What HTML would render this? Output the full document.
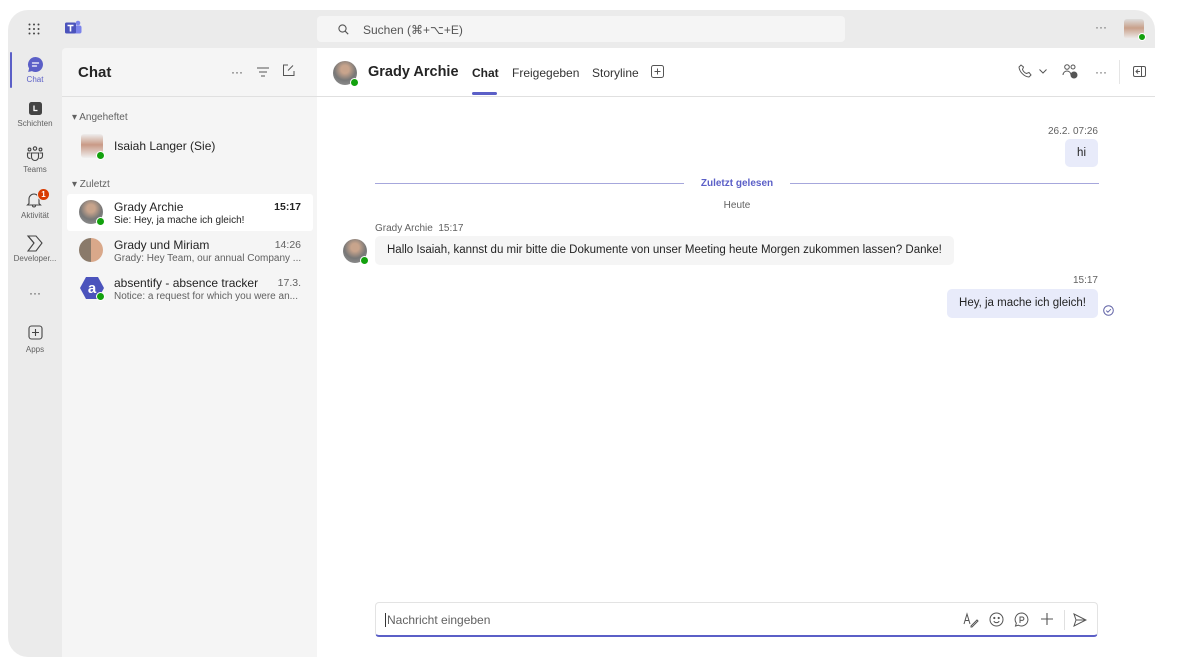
<!DOCTYPE html>
<html><head><meta charset="utf-8"><style>
*{box-sizing:border-box;margin:0;padding:0}
body{width:1178px;height:666px;background:#fff;font-family:"Liberation Sans",sans-serif;position:relative;overflow:hidden;color:#242424}
.app{position:absolute;left:8px;top:10px;width:1147px;height:647px;background:#ebebeb;border-radius:20px 20px 0 20px;overflow:hidden}
.top{position:absolute;left:0;top:0;right:0;height:38px}
.search{position:absolute;left:309px;top:6px;width:528px;height:26px;background:#f5f5f5;border-radius:4px;font-size:12px;color:#555;padding:7px 0 0 46px}
.rail{position:absolute;left:0;top:38px;width:54px;bottom:0}
.ri{position:absolute;left:0;width:54px;text-align:center;font-size:8px;color:#616161}
.list{position:absolute;left:54px;top:38px;width:255px;bottom:0;background:#f5f5f5;border-top-left-radius:4px}
.main{position:absolute;left:309px;top:38px;right:0;bottom:0;background:#fff}
.av{position:absolute;width:24px;height:24px;border-radius:50%}
.dot{position:absolute;width:9px;height:9px;border-radius:50%;background:#13a10e;border:1.5px solid #fff;right:-2px;bottom:-2px}
.row{position:absolute;left:5px;width:246px;height:37px}
.n{position:absolute;left:47px;top:6px;font-size:12px;color:#242424}
.p{position:absolute;left:47px;top:21px;font-size:10px;color:#616161;white-space:nowrap}
.t{position:absolute;right:12px;top:7px;font-size:10.5px;color:#616161}
.bub{position:absolute;border-radius:5px;font-size:11.5px;padding:0 12px;line-height:29px;white-space:nowrap}
.meta{position:absolute;font-size:10px;color:#616161}
</style></head><body>
<div class="app">
 <div class="top">
  <svg style="position:absolute;left:20px;top:13px" width="12" height="12" viewBox="0 0 12 12" fill="#444"><circle cx="1.5" cy="1.5" r="1"/><circle cx="6" cy="1.5" r="1"/><circle cx="10.5" cy="1.5" r="1"/><circle cx="1.5" cy="6" r="1"/><circle cx="6" cy="6" r="1"/><circle cx="10.5" cy="6" r="1"/><circle cx="1.5" cy="10.5" r="1"/><circle cx="6" cy="10.5" r="1"/><circle cx="10.5" cy="10.5" r="1"/></svg>
  <svg style="position:absolute;left:56px;top:10px" width="18" height="16" viewBox="0 0 18 16"><circle cx="14" cy="3" r="2.3" fill="#7b83eb"/><rect x="10" y="5.5" width="7.5" height="8" rx="2" fill="#7b83eb"/><rect x="1" y="2.5" width="11" height="11" rx="1.5" fill="#4b53bc"/><path d="M3.5 5.5h6M6.5 5.5v6" stroke="#fff" stroke-width="1.6"/></svg>
  <div class="search">Suchen (⌘+⌥+E)</div>
  <svg style="position:absolute;left:330px;top:14px" width="11" height="11" viewBox="0 0 11 11" fill="none" stroke="#555" stroke-width="1.1"><circle cx="4.5" cy="4.5" r="3.6"/><path d="M7.2 7.2l3 3"/></svg>
  <div style="position:absolute;left:1087px;top:10px;font-size:12px;color:#616161">···</div>
  <div class="av" style="left:1116px;top:9px;width:20px;height:20px;border-radius:3px;background:linear-gradient(#ddd,#c9a08a 45%,#eee)"><div class="dot" style="width:8px;height:8px"></div></div>
 </div>
 <div class="rail">
  <div style="position:absolute;left:2px;top:4px;width:2px;height:36px;background:#5b5fc7;border-radius:1px"></div>
  <div class="ri" style="top:8px"><svg width="17" height="17" viewBox="0 0 17 17"><path d="M8.5 1a7.5 7.5 0 1 1-3.6 14.1L1.2 16l.9-3.6A7.5 7.5 0 0 1 8.5 1z" fill="#5b5fc7"/><path d="M5.5 7h6M5.5 10h4" stroke="#fff" stroke-width="1.3" stroke-linecap="round"/></svg><div style="color:#5b5fc7;margin-top:0">Chat</div></div>
  <div class="ri" style="top:54px"><svg width="13" height="13" viewBox="0 0 13 13"><rect width="13" height="13" rx="2.5" fill="#444"/><path d="M5 3.5v5h3.5" stroke="#fff" stroke-width="1.3" fill="none"/></svg><div style="margin-top:2px">Schichten</div></div>
  <div class="ri" style="top:98px"><svg width="18" height="16" viewBox="0 0 18 16" fill="none" stroke="#444" stroke-width="1.1"><circle cx="9" cy="2.5" r="1.7"/><circle cx="3.5" cy="3.5" r="1.4"/><circle cx="14.5" cy="3.5" r="1.4"/><path d="M5.5 7h7v4a3.5 3.5 0 0 1-7 0z"/><path d="M4.5 7H1.5v3a2.5 2.5 0 0 0 3 2.4M13.5 7h3v3a2.5 2.5 0 0 1-3 2.4"/></svg><div style="margin-top:1px">Teams</div></div>
  <div class="ri" style="top:143px"><svg width="18" height="17" viewBox="0 0 18 17" fill="none" stroke="#444" stroke-width="1.1"><path d="M3 12.5V8a5 5 0 0 1 10 0v4.5l1.5 1.5h-13z"/><path d="M6.5 14.5a1.5 1.5 0 0 0 3 0"/></svg><div style="margin-top:1px">Aktivität</div>
   <div style="position:absolute;left:29px;top:-3px;width:13px;height:13px;border-radius:50%;background:#d83b01;color:#fff;font-size:8px;line-height:11px;font-weight:bold;border:1px solid #ebebeb">1</div></div>
  <div class="ri" style="top:187px"><svg width="18" height="17" viewBox="0 0 18 17" fill="none" stroke="#444" stroke-width="1.1"><path d="M2 1h8l6 7-6 8H2l6-8z"/><path d="M2 1l6 7"/></svg><div style="margin-top:0">Developer...</div></div>
  <div class="ri" style="top:238px;font-size:12px;color:#444">···</div>
  <div class="ri" style="top:277px"><svg width="15" height="15" viewBox="0 0 15 15" fill="none" stroke="#444" stroke-width="1.1"><rect x="1" y="1" width="13" height="13" rx="2.5"/><path d="M7.5 4v7M4 7.5h7"/></svg><div style="margin-top:3px">Apps</div></div>
 </div>
 <div class="list">
  <div style="position:absolute;left:16px;top:16px;font-size:15px;font-weight:bold">Chat</div>
  <div style="position:absolute;left:169px;top:17px;font-size:12px;color:#444">···</div>
  <svg style="position:absolute;left:195px;top:19px" width="12" height="10" viewBox="0 0 12 10" stroke="#555" stroke-width="1"><path d="M0 1h12M2 5h8M4 9h4"/></svg>
  <svg style="position:absolute;left:220px;top:16px" width="13" height="13" viewBox="0 0 13 13" fill="none" stroke="#555" stroke-width="1"><path d="M6 1H1.5v10.5H12V7"/><path d="M11 1.5l-5 5"/></svg>
  <div style="position:absolute;left:0;right:0;top:48px;border-top:1px solid #e0e0e0"></div>
  <div style="position:absolute;left:10px;top:64px;font-size:10px;color:#616161">▾ Angeheftet</div>
  <div class="av" style="left:19px;top:86px;border-radius:3px;width:22px;background:linear-gradient(#eee,#c99a86 45%,#f0f0f0)"><div class="dot"></div></div>
  <div style="position:absolute;left:52px;top:91px;font-size:12px">Isaiah Langer (Sie)</div>
  <div style="position:absolute;left:10px;top:131px;font-size:10px;color:#616161">▾ Zuletzt</div>
  <div class="row" style="top:146px;background:#fff;border-radius:3px"><div class="av" style="left:12px;top:6px;background:radial-gradient(circle at 50% 35%,#c8a48c 20%,#777 55%,#999)"><div class="dot"></div></div><div class="n">Grady Archie</div><div class="p" style="color:#242424">Sie: Hey, ja mache ich gleich!</div><div class="t" style="color:#242424;font-weight:bold">15:17</div></div>
  <div class="row" style="top:184px"><div class="av" style="left:12px;top:6px;background:linear-gradient(90deg,#8a7a6a 50%,#d9a88a 50%)"></div><div class="n">Grady und Miriam</div><div class="p">Grady: Hey Team, our annual Company ...</div><div class="t">14:26</div></div>
  <div class="row" style="top:222px"><svg style="position:absolute;left:12px;top:6px" width="26" height="24" viewBox="0 0 26 24"><path d="M7 1h12l6 11-6 11H7L1 12z" fill="#4b53bc"/><text x="13" y="17" text-anchor="middle" font-family="Liberation Sans" font-weight="bold" font-size="15" fill="#fff">a</text></svg><div class="dot" style="left:29px;top:22px"></div><div class="n">absentify - absence tracker</div><div class="p">Notice: a request for which you were an...</div><div class="t">17.3.</div></div>
 </div>
 <div class="main">
  <div class="av" style="left:16px;top:13px;background:radial-gradient(circle at 50% 35%,#c8a48c 20%,#777 55%,#999)"><div class="dot"></div></div>
  <div style="position:absolute;left:51px;top:16px;font-size:14.5px;font-weight:bold">Grady Archie</div>
  <div style="position:absolute;left:155px;top:18px;font-size:12px;font-weight:bold">Chat</div>
  <div style="position:absolute;left:155px;top:44px;width:25px;height:3px;background:#5b5fc7;border-radius:2px"></div>
  <div style="position:absolute;left:195px;top:18px;font-size:12px;color:#333">Freigegeben</div>
  <div style="position:absolute;left:275px;top:18px;font-size:12px;color:#333">Storyline</div>
  <svg style="position:absolute;left:334px;top:17px" width="13" height="13" viewBox="0 0 13 13" fill="none" stroke="#555" stroke-width="1"><rect x=".5" y=".5" width="12" height="12" rx="2"/><path d="M6.5 3.5v6M3.5 6.5h6"/></svg>
  <svg style="position:absolute;left:701px;top:16px" width="14" height="14" viewBox="0 0 14 14" fill="none" stroke="#555" stroke-width="1"><path d="M3 1l2.5 2-1 2.5a7 7 0 0 0 4 4l2.5-1 2 2.5-2 2C6 12.5 1.5 8 1 3z"/></svg>
  <svg style="position:absolute;left:722px;top:21px" width="8" height="5" viewBox="0 0 8 5" fill="none" stroke="#555"><path d="M.5.5l3.5 3.5 3.5-3.5"/></svg>
  <svg style="position:absolute;left:745px;top:15px" width="16" height="16" viewBox="0 0 16 16" fill="none" stroke="#555" stroke-width="1"><circle cx="5" cy="4" r="2.3"/><circle cx="11" cy="4" r="2"/><path d="M1 12a4 4 0 0 1 8 0"/><circle cx="12" cy="12" r="3" fill="#555"/></svg>
  <div style="position:absolute;left:778px;top:17px;font-size:12px;color:#555">···</div>
  <div style="position:absolute;left:802px;top:12px;height:24px;border-left:1px solid #e5e5e5"></div>
  <svg style="position:absolute;left:816px;top:18px" width="13" height="11" viewBox="0 0 13 11" fill="none" stroke="#555" stroke-width="1"><rect x=".5" y=".5" width="12" height="10" rx="1.5"/><path d="M8.5 .5v10M3 5.5h4M5 3.5l-2 2 2 2"/></svg>
  <div style="position:absolute;left:0;right:0;top:48px;border-top:1px solid #e0e0e0"></div>

  <div class="meta" style="right:57px;top:78px">26.2. 07:26</div>
  <div class="bub" style="right:57px;top:91px;background:#e8ebfa;height:28px;line-height:28px">hi</div>
  <div style="position:absolute;left:58px;width:309px;top:135px;border-top:1px solid #a6a7dc"></div>
  <div style="position:absolute;left:473px;width:309px;top:135px;border-top:1px solid #a6a7dc"></div>
  <div style="position:absolute;left:370px;width:100px;top:130px;text-align:center;font-size:10px;color:#5b5fc7;font-weight:bold">Zuletzt gelesen</div>
  <div class="meta" style="left:370px;width:100px;text-align:center;top:152px">Heute</div>
  <div class="meta" style="left:58px;top:175px">Grady Archie&nbsp;&nbsp;15:17</div>
  <div class="av" style="left:26px;top:191px;background:radial-gradient(circle at 50% 35%,#c8a48c 20%,#777 55%,#999)"><div class="dot"></div></div>
  <div class="bub" style="left:58px;top:188px;background:#f5f5f5">Hallo Isaiah, kannst du mir bitte die Dokumente von unser Meeting heute Morgen zukommen lassen? Danke!</div>
  <div class="meta" style="right:57px;top:227px">15:17</div>
  <div class="bub" style="right:57px;top:241px;background:#e8ebfa">Hey, ja mache ich gleich!</div>
  <svg style="position:absolute;left:786px;top:257px" width="11" height="11" viewBox="0 0 11 11" fill="none" stroke="#6264a7" stroke-width="1"><circle cx="5.5" cy="5.5" r="4.8"/><path d="M3.3 5.6l1.6 1.6 3-3"/></svg>

  <div style="position:absolute;left:58px;top:554px;width:723px;height:35px;border:1px solid #e3e3e3;border-bottom:2px solid #5b5fc7;border-radius:4px;background:#fff">
   <div style="position:absolute;left:9px;top:10px;font-size:12px;color:#616161"><span style="border-left:1px solid #333;margin-right:1px"></span>Nachricht eingeben</div>
   <svg style="position:absolute;left:587px;top:9px" width="16" height="16" viewBox="0 0 16 16" fill="none" stroke="#555" stroke-width="1"><path d="M1 12l3-10 3 10M2.2 8.5h3.6"/><path d="M8 14l6-6 1 1-6 6H8z"/></svg>
   <svg style="position:absolute;left:613px;top:9px" width="15" height="15" viewBox="0 0 15 15" fill="none" stroke="#555" stroke-width="1"><circle cx="7.5" cy="7.5" r="6.5"/><circle cx="5.3" cy="6" r=".6" fill="#555"/><circle cx="9.7" cy="6" r=".6" fill="#555"/><path d="M4.8 9.2a3.2 3.2 0 0 0 5.4 0"/></svg>
   <svg style="position:absolute;left:638px;top:9px" width="15" height="15" viewBox="0 0 15 15" fill="none" stroke="#555" stroke-width="1"><path d="M7.5 1a6.5 6.5 0 1 1-3.2 12.2L1.5 14l.8-2.8A6.5 6.5 0 0 1 7.5 1z"/><path d="M6 11V5h2.2a1.7 1.7 0 0 1 0 3.4H6"/></svg>
   <svg style="position:absolute;left:664px;top:9px" width="14" height="14" viewBox="0 0 14 14" stroke="#555" stroke-width="1.1"><path d="M7 1v12M1 7h12"/></svg>
   <div style="position:absolute;left:688px;top:7px;height:20px;border-left:1px solid #e0e0e0"></div>
   <svg style="position:absolute;left:697px;top:10px" width="14" height="14" viewBox="0 0 14 14" fill="none" stroke="#555" stroke-width="1"><path d="M1 1l12 6-12 6 2-6zM3 7h10"/></svg>
  </div>
 </div>
</div>
</body></html>
